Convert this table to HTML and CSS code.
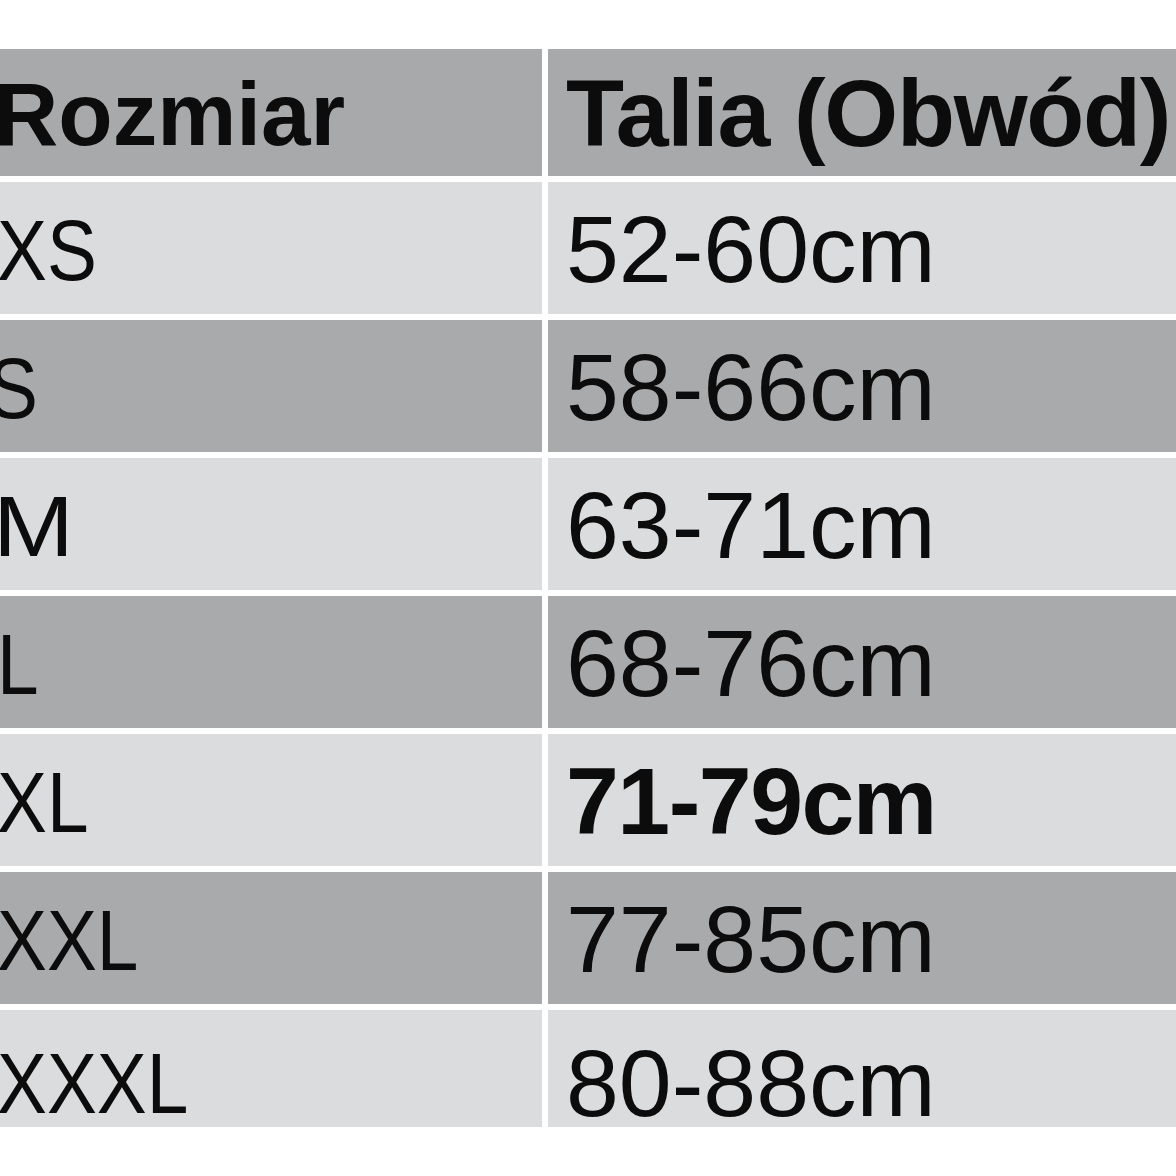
FILE: index.html
```html
<!DOCTYPE html>
<html lang="pl">
<head>
<meta charset="utf-8">
<title>Tabela rozmiarów</title>
<link rel="stylesheet" href="styles.css">
</head>
<body>
<div class="sheet">
  <div class="cell head c1"><span>Rozmiar</span></div>
  <div class="cell head c2"><span class="title">Talia (Obwód)</span></div>

  <div class="cell light c1"><span class="sz">XS</span></div>
  <div class="cell light c2"><span>52-60cm</span></div>

  <div class="cell dark c1"><span class="sz sz-shift">S</span></div>
  <div class="cell dark c2"><span>58-66cm</span></div>

  <div class="cell light c1"><span class="sz sz-wide">M</span></div>
  <div class="cell light c2"><span>63-71cm</span></div>

  <div class="cell dark c1"><span class="sz">L</span></div>
  <div class="cell dark c2"><span>68-76cm</span></div>

  <div class="cell light c1"><span class="sz">XL</span></div>
  <div class="cell light c2"><span class="strong">71-79cm</span></div>

  <div class="cell dark c1"><span class="sz">XXL</span></div>
  <div class="cell dark c2"><span>77-85cm</span></div>

  <div class="cell light c1 last"><span class="sz">XXXL</span></div>
  <div class="cell light c2 last"><span>80-88cm</span></div>
</div>
</body>
</html>
```

FILE: styles.css
```css
html, body {
  margin: 0;
  padding: 0;
  background: #ffffff;
  overflow: hidden;
  width: 1176px;
  height: 1176px;
}

body {
  font-family: "Liberation Sans", Arial, sans-serif;
  color: #0c0c0c;
}

.sheet {
  display: grid;
  grid-template-columns: 564px 720px;
  grid-template-rows: 127px repeat(6, 132px) 117px;
  column-gap: 6px;
  row-gap: 6px;
  margin-top: 49px;
  margin-left: -22px;
  width: 1290px;
}

.cell {
  display: flex;
  align-items: center;
  padding-left: 18px;
  overflow: hidden;
  white-space: nowrap;
  line-height: 1;
}

.head {
  background: #a8a9ab;
  font-weight: bold;
  font-size: 89px;
  padding-top: 4px;
}

.head.c1 {
  padding-left: 16px;
}

.title {
  letter-spacing: -1.3px;
}

.light {
  background: #dbdcde;
}

.dark {
  background: #a9aaac;
}

.c2 {
  font-size: 95px;
  padding-top: 2px;
}

.c1 .sz {
  display: inline-block;
  font-size: 86px;
  margin-left: 1px;
  transform: scaleX(0.87);
  transform-origin: left center;
  padding-top: 4px;
}

.c1 .sz-wide {
  transform: scaleX(1.13);
  margin-left: -3px;
}

.c1 .sz-shift {
  margin-left: -8px;
}

.last {
  padding-top: 0;
  align-items: flex-start;
}

.last span {
  margin-top: 26px;
}

.strong {
  font-weight: bold;
  letter-spacing: -1.5px;
}
```
